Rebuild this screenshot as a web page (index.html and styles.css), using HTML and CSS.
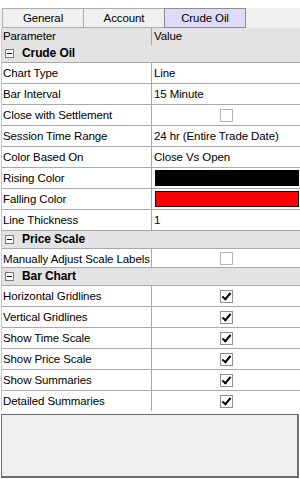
FILE: index.html
```html
<!DOCTYPE html>
<html lang="en">
<head>
    <meta charset="UTF-8">
    <title>Chart Properties</title>
    <link rel="stylesheet" href="styles.css">
</head>
<body>
    <div class="tabs">
        <div class="tab">General</div>
        <div class="tab">Account</div>
        <div class="tab active">Crude Oil</div>
    </div>

    <div class="grid">
        <div class="row head">
            <div class="name">Parameter</div>
            <div class="value">Value</div>
        </div>

        <div class="cat"><span class="minus"></span>Crude Oil</div>
        <div class="row"><div class="name">Chart Type</div><div class="value">Line</div></div>
        <div class="row"><div class="name">Bar Interval</div><div class="value">15 Minute</div></div>
        <div class="row"><div class="name">Close with Settlement</div><div class="value center"><span class="check"></span></div></div>
        <div class="row"><div class="name">Session Time Range</div><div class="value">24 hr (Entire Trade Date)</div></div>
        <div class="row"><div class="name">Color Based On</div><div class="value">Close Vs Open</div></div>
        <div class="row"><div class="name">Rising Color</div><div class="value"><span class="swatch" style="background:#000"></span></div></div>
        <div class="row"><div class="name">Falling Color</div><div class="value"><span class="swatch" style="background:#ff0000"></span></div></div>
        <div class="row"><div class="name">Line Thickness</div><div class="value">1</div></div>

        <div class="cat"><span class="minus"></span>Price Scale</div>
        <div class="row short"><div class="name">Manually Adjust Scale Labels</div><div class="value center"><span class="check"></span></div></div>

        <div class="cat"><span class="minus"></span>Bar Chart</div>
        <div class="row"><div class="name">Horizontal Gridlines</div><div class="value center"><span class="check on"></span></div></div>
        <div class="row"><div class="name">Vertical Gridlines</div><div class="value center"><span class="check on"></span></div></div>
        <div class="row"><div class="name">Show Time Scale</div><div class="value center"><span class="check on"></span></div></div>
        <div class="row"><div class="name">Show Price Scale</div><div class="value center"><span class="check on"></span></div></div>
        <div class="row"><div class="name">Show Summaries</div><div class="value center"><span class="check on"></span></div></div>
        <div class="row last"><div class="name">Detailed Summaries</div><div class="value center"><span class="check on"></span></div></div>
    </div>

    <div class="desc"></div>
</body>
</html>
```

FILE: styles.css
```css
body {
    margin: 0;
    padding-top: 8px;
    background: #fff;
    font-family: 'Liberation Sans', Arial, sans-serif;
    font-size: 11.5px;
    letter-spacing: -0.1px;
    color: #000;
}

.tabs {
    display: flex;
    height: 20px;
    padding-left: 2px;
    background: #f0f0f0;
}

.tab {
    box-sizing: border-box;
    width: 82px;
    height: 20px;
    line-height: 18px;
    text-align: center;
    background: #f0f0f0;
    border: 1px solid #adadad;
    margin-right: -1px;
}

.tab.active {
    background: #dcdcf6;
    border-color: #8c8c8c;
    position: relative;
}

.grid {
    background: #fff;
    border-left: 1px solid #c8c8c8;
    margin-left: 1px;
}

.row {
    display: grid;
    grid-template-columns: 150px 1fr;
    box-sizing: border-box;
    height: 21px;
    border-bottom: 1px solid #a9a9a9;
}

.row.short {
    height: 19px;
}

.row.last {
    border-bottom: none;
    height: 20px;
}

.row.head {
    height: 17px;
    background: #e3e3e3;
    border-bottom: none;
}

.name {
    padding-left: 1px;
    line-height: 20px;
    white-space: nowrap;
    overflow: hidden;
    border-right: 1px solid #a9a9a9;
}

.value {
    padding-left: 2px;
    line-height: 20px;
    white-space: nowrap;
    overflow: hidden;
    display: flex;
    align-items: center;
}

.head .name,
.head .value {
    line-height: 17px;
}

.value.center {
    justify-content: center;
    padding-left: 0;
}

.cat {
    box-sizing: border-box;
    height: 18px;
    background: #e3e3e3;
    border-bottom: 1px solid #a9a9a9;
    font-size: 12px;
    font-weight: bold;
    line-height: 17px;
    display: flex;
    align-items: center;
    padding-left: 3px;
}

.minus {
    box-sizing: border-box;
    width: 9px;
    height: 9px;
    border: 1px solid #7a7a7a;
    background: #fff;
    margin-right: 8px;
    position: relative;
}

.minus::after {
    content: "";
    position: absolute;
    left: 1px;
    top: 3px;
    width: 5px;
    height: 1px;
    background: #000;
}

.check {
    box-sizing: border-box;
    width: 13px;
    height: 13px;
    border: 1px solid #b5b5b5;
    background: #fff;
    position: relative;
}

.check.on {
    border-color: #8f8f8f;
}

.check.on::after {
    content: "";
    position: absolute;
    left: 3px;
    top: 0;
    width: 3px;
    height: 7px;
    border-right: 2px solid #000;
    border-bottom: 2px solid #000;
    transform: rotate(40deg);
}

.swatch {
    box-sizing: border-box;
    display: block;
    width: 144px;
    height: 16px;
    border: 1px solid #000;
    margin-left: 1px;
}

.desc {
    box-sizing: border-box;
    height: 64px;
    margin: 3px 1px 0 1px;
    background: #f0f0f0;
    border-style: solid;
    border-color: #6e6e6e;
    border-width: 1px 2px 2px 1px;
}
```
